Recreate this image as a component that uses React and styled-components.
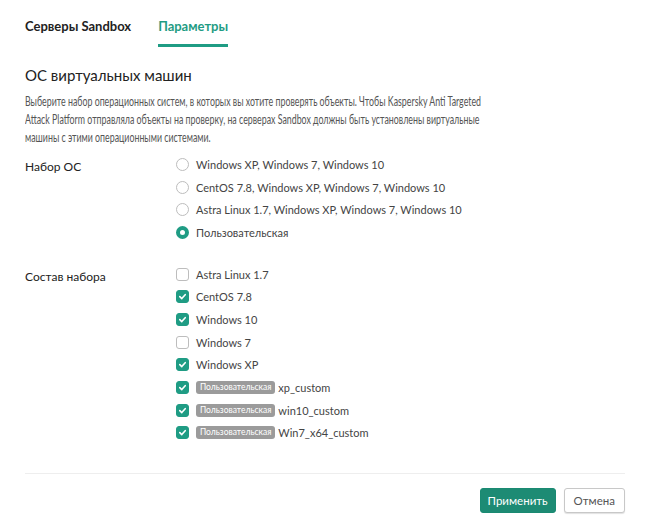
import React from "react";
import styled, { createGlobalStyle } from "styled-components";

const Global = createGlobalStyle`
  html, body { margin: 0; padding: 0; background: #fff; }
  body { font-family: Lato, "Open Sans", "Noto Sans", sans-serif; color: #222; }
  * { box-sizing: border-box; }
`;

const GREEN = "#1f9c84";

const Page = styled.div`
  width: 650px;
  height: 526px;
  padding: 0 25px;
  display: flex;
  flex-direction: column;
`;

const Tabs = styled.div`
  display: flex;
  gap: 27px;
  height: 47px;
  padding-top: 17px;
`;

const Tab = styled.div`
  font-size: 13px;
  font-weight: 700;
  color: ${(p) => (p.$active ? GREEN : "#222")};
  height: 30px;
  line-height: 18px;
  border-bottom: 3px solid ${(p) => (p.$active ? GREEN : "transparent")};
`;

const Heading = styled.h2`
  margin: 18px 0 0;
  font-size: 15px;
  font-weight: 400;
  line-height: 20px;
  color: #222;
`;

const Desc = styled.p`
  margin: 8px 0 0;
  font-family: Lato, sans-serif;
  font-size: 12.5px;
  line-height: 18px;
  color: #555;
  white-space: nowrap;
  transform: scaleX(0.705);
  transform-origin: left center;
`;

const FieldRow = styled.div`
  display: grid;
  grid-template-columns: 151px 1fr;
  margin-top: ${(p) => p.$mt}px;
`;

const Label = styled.div`
  font-size: 12px;
  color: #222;
  line-height: 22.7px;
  padding-top: ${(p) => p.$pt || 0}px;
`;

const Options = styled.div`
  display: flex;
  flex-direction: column;
`;

const Option = styled.label`
  display: flex;
  align-items: center;
  gap: 7px;
  height: 22.7px;
  font-size: 11px;
  color: #444;
`;

const Radio = styled.span`
  width: 13px;
  height: 13px;
  border-radius: 50%;
  flex: none;
  border: ${(p) => (p.$checked ? `4px solid ${GREEN}` : "1px solid #bdbdbd")};
  background: #fff;
`;

const Box = styled.span`
  width: 13px;
  height: 13px;
  border-radius: 3px;
  flex: none;
  display: flex;
  align-items: center;
  justify-content: center;
  border: 1px solid ${(p) => (p.$checked ? GREEN : "#bdbdbd")};
  background: ${(p) => (p.$checked ? GREEN : "#fff")};
`;

const Badge = styled.span`
  background: #9b9b9b;
  color: #fff;
  font-size: 8.5px;
  line-height: 13px;
  height: 13px;
  padding: 0 4px;
  border-radius: 3px;
  margin-right: -4px;
`;

const Spacer = styled.div`
  flex: 1;
`;

const Divider = styled.div`
  height: 1px;
  background: #eeeeee;
`;

const Footer = styled.div`
  display: flex;
  justify-content: flex-end;
  gap: 8px;
  padding: 14px 0 13px;
`;

const Button = styled.button`
  height: 25px;
  padding: 0 ${(p) => (p.$primary ? 7 : 9)}px;
  border-radius: 3px;
  font-family: inherit;
  font-size: 11.5px;
  border: 1px solid ${(p) => (p.$primary ? "#1a8a72" : "#c8c8c8")};
  background: ${(p) => (p.$primary ? "#1d8b74" : "#fff")};
  color: ${(p) => (p.$primary ? "#fff" : "#555")};
  box-shadow: ${(p) => (p.$primary ? "none" : "0 1px 1px rgba(0,0,0,0.12)")};
`;

const Check = () => (
  <svg width="9" height="9" viewBox="0 0 10 10">
    <path d="M2 5.2 L4.2 7.3 L8 3" fill="none" stroke="#fff" strokeWidth="1.8" strokeLinecap="round" strokeLinejoin="round" />
  </svg>
);

const radios = [
  ["Windows XP, Windows 7, Windows 10", false],
  ["CentOS 7.8, Windows XP, Windows 7, Windows 10", false],
  ["Astra Linux 1.7, Windows XP, Windows 7, Windows 10", false],
  ["Пользовательская", true],
];

const boxes = [
  ["Astra Linux 1.7", false],
  ["CentOS 7.8", true],
  ["Windows 10", true],
  ["Windows 7", false],
  ["Windows XP", true],
  ["xp_custom", true, true],
  ["win10_custom", true, true],
  ["Win7_x64_custom", true, true],
];

export default function App() {
  return (
    <>
      <Global />
      <Page>
        <Tabs>
          <Tab>Серверы Sandbox</Tab>
          <Tab $active>Параметры</Tab>
        </Tabs>
        <Heading>ОС виртуальных машин</Heading>
        <Desc>
          Выберите набор операционных систем, в которых вы хотите проверять объекты. Чтобы Kaspersky Anti Targeted
          <br />
          Attack Platform отправляла объекты на проверку, на серверах Sandbox должны быть установлены виртуальные
          <br />
          машины с этими операционными системами.
        </Desc>
        <FieldRow $mt={6}>
          <Label $pt={3}>Набор ОС</Label>
          <Options>
            {radios.map(([t, c]) => (
              <Option key={t}>
                <Radio $checked={c} />
                {t}
              </Option>
            ))}
          </Options>
        </FieldRow>
        <FieldRow $mt={19}>
          <Label $pt={3}>Состав набора</Label>
          <Options>
            {boxes.map(([t, c, custom]) => (
              <Option key={t}>
                <Box $checked={c}>{c && <Check />}</Box>
                {custom && <Badge>Пользовательская</Badge>}
                {t}
              </Option>
            ))}
          </Options>
        </FieldRow>
        <Spacer />
        <Divider />
        <Footer>
          <Button $primary>Применить</Button>
          <Button>Отмена</Button>
        </Footer>
      </Page>
    </>
  );
}
